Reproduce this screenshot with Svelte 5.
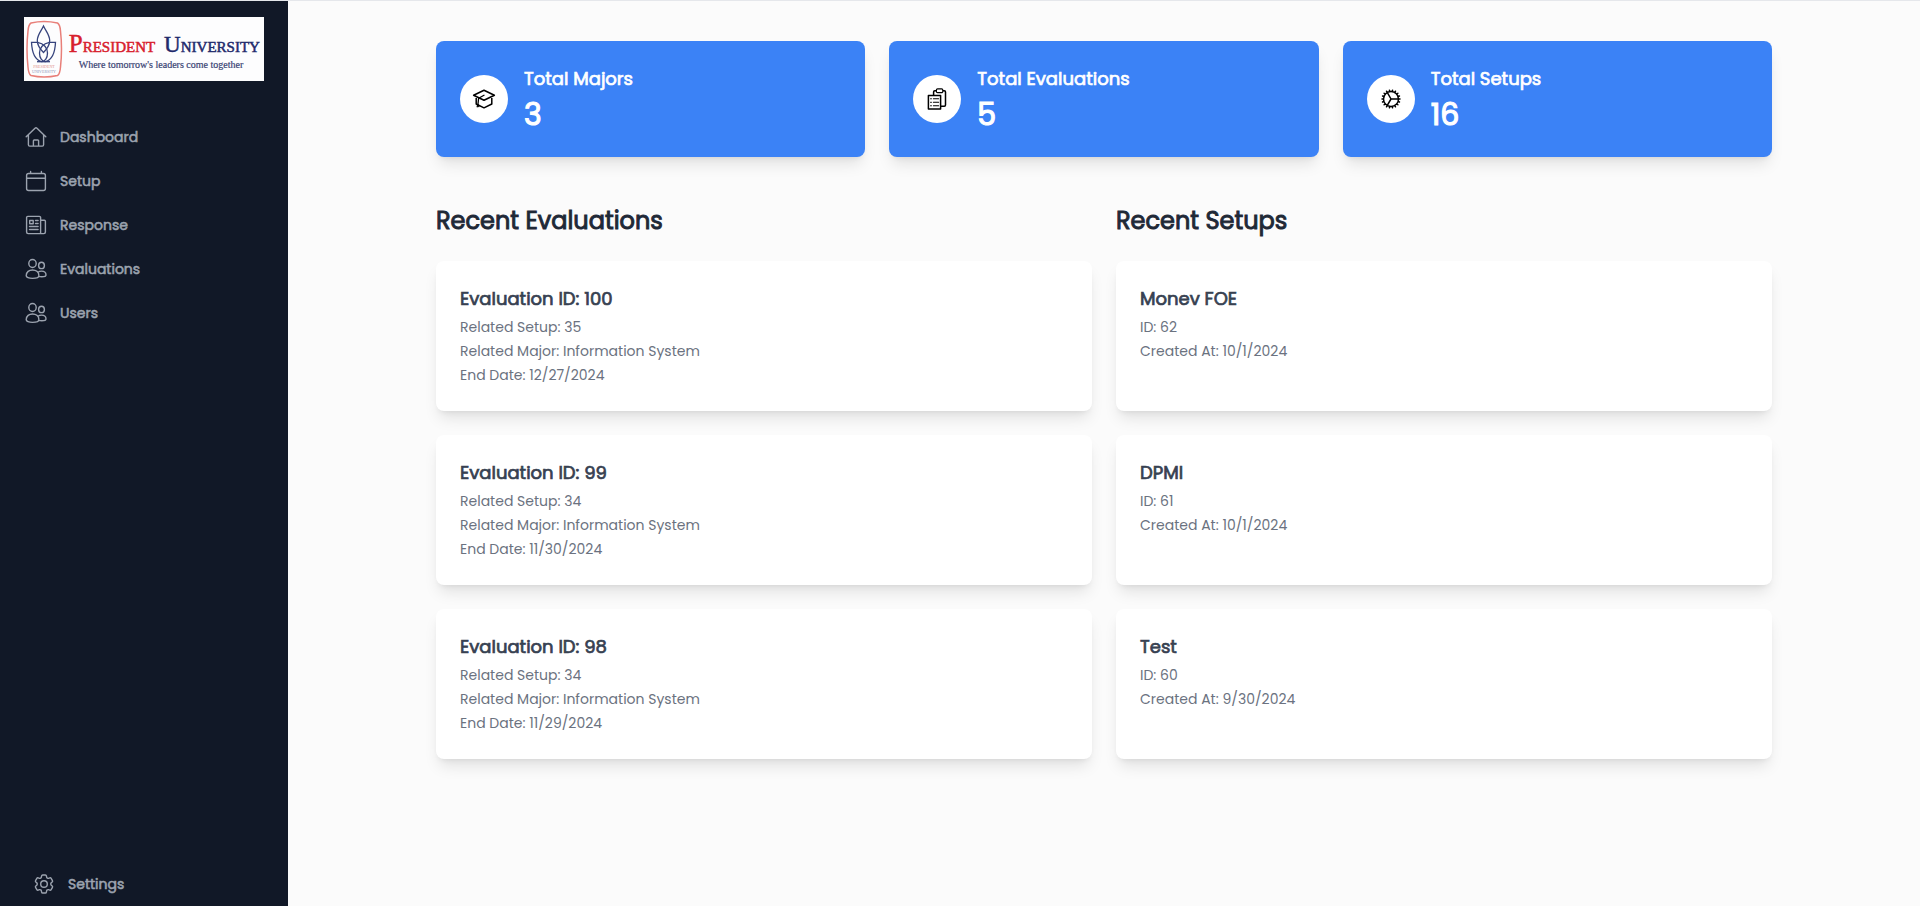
<script>
  const menu = [
    { label: 'Dashboard', icon: 'home' },
    { label: 'Setup', icon: 'calendar' },
    { label: 'Response', icon: 'news' },
    { label: 'Evaluations', icon: 'people' },
    { label: 'Users', icon: 'people' },
  ];

  const totals = [
    { label: 'Total Majors', value: 3, icon: 'cap' },
    { label: 'Total Evaluations', value: 5, icon: 'clipboard' },
    { label: 'Total Setups', value: 16, icon: 'cog' },
  ];

  const evaluations = [
    { id: 100, setup: 35, major: 'Information System', end: '12/27/2024' },
    { id: 99, setup: 34, major: 'Information System', end: '11/30/2024' },
    { id: 98, setup: 34, major: 'Information System', end: '11/29/2024' },
  ];

  const setups = [
    { name: 'Monev FOE', id: 62, created: '10/1/2024' },
    { name: 'DPMI', id: 61, created: '10/1/2024' },
    { name: 'Test', id: 60, created: '9/30/2024' },
  ];
</script>

{#snippet icon(name)}
  <svg class="icon" viewBox="0 0 24 24" aria-hidden="true">
    {#if name === 'home'}
      <path d="M2.2 11.8 11 3.2a1.5 1.5 0 0 1 2 0l8.8 8.6M4.4 9.8v10a1.3 1.3 0 0 0 1.3 1.3h12.6a1.3 1.3 0 0 0 1.3-1.3v-10M9.4 21v-5.2a.8.8 0 0 1 .8-.8h3.6a.8.8 0 0 1 .8.8V21" />
    {:else if name === 'calendar'}
      <rect x="2.6" y="4.5" width="18.8" height="17" rx="2" />
      <path d="M2.6 9.2h18.8M6.6 2.4v2M17.4 2.4v2" />
    {:else if name === 'news'}
      <path d="M16.6 20.6V4.6a1.2 1.2 0 0 0-1.2-1.2H3.8a1.2 1.2 0 0 0-1.2 1.2v14.5a1.5 1.5 0 0 0 1.5 1.5h15.8a1.5 1.5 0 0 0 1.5-1.5V8.3a1 1 0 0 0-1-1h-3.8" />
      <rect x="5.7" y="7.5" width="3.5" height="3.3" />
      <path d="M11.500 7.500h2.600M11.500 10.500h2.600M5.500 13.500h8.600M5.500 16.500h8.600" />
    {:else if name === 'people'}
      <ellipse cx="8.5" cy="6.5" rx="3.7" ry="4" />
      <ellipse cx="17.5" cy="8.4" rx="2.9" ry="3.2" />
      <path d="M2.2 18.8c0-4 3-5.8 6.3-5.8s6.4 1.8 6.4 5.8c0 1.4-2.7 2.6-6.4 2.6s-6.3-1.2-6.3-2.600ZM14 15.200c1-.8 2.200-1.100 3.500-1.100 2.500 0 4.500 1.400 4.500 3.900 0 1-1.700 1.800-4.300 1.800-1.100 0-2.100-.1-2.900-.4" />
    {:else if name === 'settings'}
      <path d="M9.594 3.94c.09-.542.56-.94 1.11-.94h2.593c.55 0 1.02.398 1.11.94l.213 1.281c.063.374.313.686.645.87.074.04.147.083.22.127.325.196.72.257 1.075.124l1.217-.456a1.125 1.125 0 0 1 1.37.49l1.296 2.247a1.125 1.125 0 0 1-.26 1.431l-1.003.827c-.293.241-.438.613-.43.992a7.723 7.723 0 0 1 0 .255c-.008.378.137.75.43.991l1.004.827c.424.35.534.955.26 1.43l-1.298 2.247a1.125 1.125 0 0 1-1.369.491l-1.217-.456c-.355-.133-.75-.072-1.076.124a6.47 6.47 0 0 1-.22.128c-.331.183-.581.495-.644.869l-.213 1.281c-.09.543-.56.94-1.11.94h-2.594c-.55 0-1.019-.398-1.11-.94l-.213-1.281c-.062-.374-.312-.686-.644-.87a6.52 6.52 0 0 1-.22-.127c-.325-.196-.72-.257-1.076-.124l-1.217.456a1.125 1.125 0 0 1-1.369-.49l-1.297-2.247a1.125 1.125 0 0 1 .26-1.431l1.004-.827c.292-.24.437-.613.43-.991a6.932 6.932 0 0 1 0-.255c.007-.38-.138-.751-.43-.992l-1.004-.827a1.125 1.125 0 0 1-.26-1.43l1.297-2.247a1.125 1.125 0 0 1 1.37-.491l1.216.456c.356.133.751.072 1.076-.124.072-.044.146-.086.22-.128.332-.183.582-.495.644-.869l.214-1.28Z" />
      <circle cx="12" cy="12" r="3.3" />
    {:else if name === 'cap'}
      <path d="M12 3.3 1.6 8.3 12 13.3 22.4 8.300ZM4.200 9.800V17L12 20.800 19.800 17V9.800" />
      <path d="M12 8.300 6.600 11.200 6 17M5.200 19.800 6 17 6.800 19.600" stroke-width="1.3" />
    {:else if name === 'clipboard'}
      <path d="M3.400 8.400h12.200v13.700H3.400ZM8.600 8.200V5a1.200 1.200 0 0 1 1.200-1.200h9.500a1.200 1.200 0 0 1 1.200 1.200v13a1.200 1.200 0 0 1-1.200 1.200H16" />
      <rect x="11.400" y="1.900" width="6.400" height="3.800" rx="1.200" fill="#fff" stroke-width="1.200" />
      <path d="M5.600 11.700h.8M8.400 11.700h5.200M5.600 15.200h.8M8.400 15.200h5.200M5.600 18.700h.8M8.400 18.700h5.200" stroke-width="1.100" />
    {:else if name === 'cog'}
      <path d="M4.5 12a7.5 7.5 0 0 0 15 0m-15 0a7.5 7.5 0 1 1 15 0m-15 0H3m16.5 0H21m-1.5 0H12m-8.457 3.077 1.41-.513m14.095-5.13 1.41-.513M5.106 17.785l1.15-.964m11.49-9.642 1.149-.964M7.501 19.795l.75-1.3m7.5-12.99.75-1.3m-6.063 16.658.26-1.477m2.605-14.772.26-1.477m0 17.726-.26-1.477M10.698 4.614l-.26-1.477M16.5 19.794l-.75-1.299M7.5 4.205 12 12m6.894 5.785-1.149-.964M6.256 7.178l-1.15-.964m15.352 8.864-1.41-.513M4.954 9.435l-1.41-.514M12.002 12l-3.75 6.495" />
    {/if}
  </svg>
{/snippet}

<div class="page">
  <aside class="sidebar">
    <svg class="logo" viewBox="0 0 240 64" role="img" aria-label="President University">
      <rect width="240" height="64" fill="#fdfdfe" />
      <g fill="none">
        <path d="M7 6Q20 3 33.500 6Q36 7.500 36.500 14Q38.500 32 36.500 50Q36 57 33.500 58.500Q20 61.500 7 58.500Q4.500 57 4 50Q2 32 4 14Q4.500 7.500 7 6Z" stroke="#e87f79" stroke-width="1.500" />
        <g stroke="#36437c" stroke-width="1.300">
          <path d="M19.500 9C17 14.500 13.300 18 13.300 23.500C13.300 28 16 32 19.500 35.500C23 32 25.700 28 25.700 23.500C25.700 18 22 14.500 19.500 9Z" />
          <path d="M7.500 25.300H13.500C20 26.500 23.500 31 23.500 36C23.500 41 21 44.700 17.500 44.700C11 43 8 36 7.500 25.300Z" />
          <path d="M31.500 25.300H25.500C19 26.500 15.500 31 15.500 36C15.500 41 18 44.700 21.500 44.700C28 43 31 36 31.500 25.300Z" />
          <path d="M13 44.700H26" />
        </g>
      </g>
      <g font-family="'Liberation Serif', serif" text-anchor="middle">
        <text x="20" y="51" font-size="4" fill="#e2928c">PRESIDENT</text>
        <text x="20" y="56" font-size="4" fill="#8f97b8">UNIVERSITY</text>
        <text x="88" y="35" font-size="15" fill="#d8202c" stroke="#d8202c" stroke-width=".5"><tspan font-size="25">P</tspan>RESIDENT</text>
        <text x="188" y="35" font-size="15" fill="#1f2a6c" stroke="#1f2a6c" stroke-width=".5"><tspan font-size="23">U</tspan>NIVERSITY</text>
        <text x="137" y="51" font-size="10" fill="#3a4474" stroke="#3a4474" stroke-width=".2">Where tomorrow's leaders come together</text>
      </g>
    </svg>
    <nav class="menu">
      {#each menu as item}
        <a href="#{item.label.toLowerCase()}">{@render icon(item.icon)}{item.label}</a>
      {/each}
    </nav>
    <nav class="menu foot">
      <a href="#settings">{@render icon('settings')}Settings</a>
    </nav>
  </aside>

  <main>
    <div class="content">
      <section class="totals">
        {#each totals as t}
          <article class="total">
            <span class="disc">{@render icon(t.icon)}</span>
            <div>
              <h2>{t.label}</h2>
              <p>{t.value}</p>
            </div>
          </article>
        {/each}
      </section>

      <div class="columns">
        <section>
          <h2>Recent Evaluations</h2>
          {#each evaluations as e}
            <article class="card">
              <h3>Evaluation ID: {e.id}</h3>
              <p>Related Setup: {e.setup}</p>
              <p>Related Major: {e.major}</p>
              <p>End Date: {e.end}</p>
            </article>
          {/each}
        </section>
        <section>
          <h2>Recent Setups</h2>
          {#each setups as s}
            <article class="card">
              <h3>{s.name}</h3>
              <p>ID: {s.id}</p>
              <p>Created At: {s.created}</p>
            </article>
          {/each}
        </section>
      </div>
    </div>
  </main>
</div>

<style>
  :global(body) {
    margin: 0;
    background: #fbfbfb;
  }
  .page {
    box-sizing: border-box;
    display: flex;
    min-height: 100vh;
    border-top: 1px solid #e5e7eb;
    font-family: Poppins, Inter, sans-serif;
    color: #1f2937;
  }
  h2,
  h3,
  p {
    margin: 0;
  }
  /* Regular weight, thickened with an outline so that widths stay those of the regular face */
  h2,
  h3,
  .total p,
  .menu a {
    font-weight: 400;
    -webkit-text-stroke: 0.04em currentColor;
  }
  .icon {
    width: 24px;
    height: 24px;
    flex: none;
    fill: none;
    stroke: currentColor;
    stroke-width: 1.4;
    stroke-linecap: round;
    stroke-linejoin: round;
  }
  .sidebar {
    box-sizing: border-box;
    flex: none;
    width: 288px;
    display: flex;
    flex-direction: column;
    padding-top: 16px;
    background: #111827;
  }
  .logo {
    width: 240px;
    height: 64px;
    margin: 0 24px 34px;
  }
  .menu a {
    display: flex;
    align-items: center;
    gap: 12px;
    height: 44px;
    padding: 0 24px;
    color: #9ca3af;
    font-size: 14px;
    text-decoration: none;
  }
  .foot {
    margin-top: auto;
    padding-left: 8px;
  }
  main {
    flex: 1;
    min-width: 0;
    padding: 8px 0;
  }
  .content {
    box-sizing: border-box;
    max-width: 1400px;
    margin: 0 auto;
    padding: 32px;
  }
  .totals {
    display: grid;
    grid-template-columns: repeat(3, 1fr);
    gap: 24px;
    margin-bottom: 48px;
  }
  .total,
  .card {
    border-radius: 8px;
    padding: 24px;
    box-shadow: 0 10px 15px -3px rgba(0, 0, 0, 0.1), 0 4px 6px -4px rgba(0, 0, 0, 0.1);
  }
  .total {
    display: flex;
    align-items: center;
    gap: 16px;
    background: #3b82f6;
    color: #fff;
  }
  .disc {
    display: grid;
    place-items: center;
    width: 48px;
    height: 48px;
    border-radius: 50%;
    background: #fff;
    color: #000;
  }
  .disc .icon {
    stroke-width: 1.5;
  }
  .total h2 {
    font-size: 18px;
    line-height: 28px;
  }
  .total p {
    margin-top: 4px;
    font-size: 30px;
    line-height: 36px;
  }
  .columns {
    display: grid;
    grid-template-columns: repeat(2, 1fr);
    gap: 24px;
  }
  .columns section {
    display: flex;
    flex-direction: column;
    gap: 24px;
  }
  .columns h2 {
    font-size: 24px;
    line-height: 32px;
  }
  .card {
    box-sizing: border-box;
    min-height: 150px;
    background: #fff;
  }
  .card h3 {
    margin-bottom: 2px;
    color: #374151;
    font-size: 18px;
    line-height: 28px;
  }
  .card p {
    color: #6b7280;
    font-size: 14px;
    line-height: 24px;
  }
</style>
